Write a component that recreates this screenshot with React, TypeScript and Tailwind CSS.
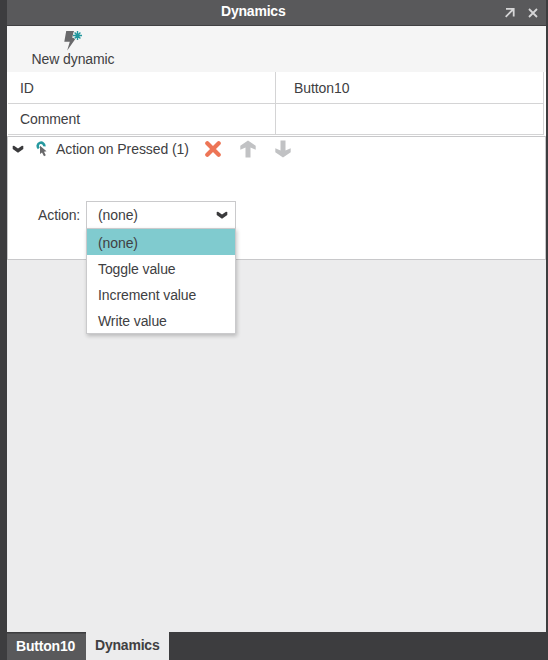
import React from "react";

const OPTIONS = ["(none)", "Toggle value", "Increment value", "Write value"];

function Chevron() {
  return (
    <svg width="12" height="8" viewBox="0 0 12 8" className="shrink-0">
      <path d="M0.7 1 L2 0.7 L6 3.4 L10 0.7 L11.3 1 V4 L6 7.8 L0.7 4 Z" fill="#3a3a3c" />
    </svg>
  );
}

function BoltIcon() {
  return (
    <svg width="20" height="22" viewBox="0 0 20 22" className="block">
      <path d="M3.2 1 H11 L9.2 7.8 H13.2 L4.2 20.5 L6.8 11.8 H1.3 Z" fill="#69696b" />
      <circle cx="14.5" cy="5.5" r="4.6" fill="#f5f5f5" />
      <g stroke="#22979d" strokeWidth="1.4">
        <path d="M14.5 1 V10 M10 5.5 H19 M11.6 2.6 L17.4 8.4 M17.4 2.6 L11.6 8.4" />
      </g>
    </svg>
  );
}

function PressedIcon() {
  return (
    <svg width="11" height="16" viewBox="0 0 11 16" className="shrink-0">
      <path d="M2.8 7.4 A3.3 3.3 0 1 1 8.3 5.4" fill="none" stroke="#26999f" strokeWidth="2.6" />
      <path d="M4 4.8 V13 L6 11.5 L8 15.2 L9.8 14.2 L8 10.8 L10.5 10.2 Z" fill="#69696b" />
    </svg>
  );
}

function DeleteIcon() {
  return (
    <svg width="16" height="16" viewBox="0 0 16 16" className="shrink-0">
      <path d="M2.3 2.3 L13.7 13.7 M13.7 2.3 L2.3 13.7" stroke="#ed7556" strokeWidth="4.2" strokeLinecap="round" />
    </svg>
  );
}

function ArrowIcon({ down = false }: { down?: boolean }) {
  return (
    <svg width="16" height="18" viewBox="0 0 16 18" className={down ? "shrink-0 rotate-180" : "shrink-0"}>
      <path d="M8 0.5 L15.7 5.8 V9.8 L10.5 7.6 V17.5 H5.5 V7.6 L0.3 9.8 V5.8 Z" fill="#c1c2c4" />
    </svg>
  );
}

export default function App() {
  return (
    <div className="flex h-[660px] w-[548px] flex-col overflow-hidden bg-[#3d3d3f] pr-[2px] pl-[7px] font-['Liberation_Sans',Arial,sans-serif] text-[14px] leading-4 tracking-[-0.09px] text-[#404042]">
      <header className="flex h-[26px] shrink-0 items-center border-b border-[#414143] bg-[#59595b] pb-[2px]">
        <h1 className="-mt-[2px] flex-1 pl-[214px] font-bold tracking-[-0.2px] text-white">Dynamics</h1>
        <div className="flex w-[42px] items-center gap-[13px] pt-[2px]">
          <svg width="11" height="11" viewBox="0 0 11 11">
            <path d="M2 1.8 H9.7 V9.5 M9.5 2 L1.7 9.8" fill="none" stroke="#d6d6d7" strokeWidth="1.8" />
          </svg>
          <svg width="10" height="10" viewBox="0 0 10 10">
            <path d="M1 1 L9 9 M9 1 L1 9" stroke="#d6d6d7" strokeWidth="1.8" />
          </svg>
        </div>
      </header>

      <div className="h-[46px] shrink-0 bg-[#f5f5f5] pt-1 pl-[25px]">
        <button className="flex w-[82px] flex-col items-center whitespace-nowrap">
          <BoltIcon />
          <span className="-mt-px">New dynamic</span>
        </button>
      </div>

      <div className="h-16 shrink-0 bg-white pr-[2px] pl-px">
        <div className="flex h-8 border-r border-b border-[#d4d4d5]">
          <div className="w-[268px] border-r border-[#d4d4d5] pt-2 pl-3">ID</div>
          <div className="flex-1 pt-2 pl-[18px]">Button10</div>
        </div>
        <div className="flex h-[31px] border-r border-b border-[#d4d4d5]">
          <div className="w-[268px] border-r border-[#d4d4d5] pt-[7px] pl-3">Comment</div>
          <div className="flex-1" />
        </div>
      </div>

      <section className="h-[124px] shrink-0 border border-[#c8c8ca] bg-white">
        <div className="flex h-6 items-center pl-[4px]">
          <Chevron />
          <div className="ml-[12px] flex items-center">
            <PressedIcon />
            <span className="ml-[9px] w-[133px] whitespace-nowrap">Action on Pressed (1)</span>
          </div>
          <div className="ml-[16px] flex items-center gap-[19px]">
            <DeleteIcon />
            <ArrowIcon />
            <ArrowIcon down />
          </div>
        </div>

        <div className="mt-10 flex items-start pl-[30px]">
          <span className="w-12 pt-[6px]">Action:</span>
          <div className="relative w-[150px]">
            <div className="flex h-[28px] items-center justify-between border border-[#cacacc] bg-white pr-[7px] pb-px pl-[11px]">
              <span>(none)</span>
              <Chevron />
            </div>
            <ul className="absolute top-[27px] left-0 z-10 w-[150px] border border-[#cacacc] bg-white shadow-[1px_2px_4px_rgba(0,0,0,0.22)]">
              {OPTIONS.map((option, index) => (
                <li
                  key={option}
                  className={index === 0 ? "h-[26px] bg-[#80cbcf] pt-[6px] pl-[11px]" : "h-[26px] pt-[6px] pl-[11px]"}
                >
                  {option}
                </li>
              ))}
            </ul>
          </div>
        </div>
      </section>

      <main className="min-h-0 flex-1 bg-[#ececed]" />

      <nav className="flex h-7 shrink-0 font-bold tracking-[-0.2px]">
        <div className="mt-px w-[79px] border-t border-[#4b4b4d] bg-[#59595b] pt-[4px] pl-[9px] text-white">Button10</div>
        <div className="w-[83px] bg-[#ececed] pt-[5px] pl-[9px]">Dynamics</div>
      </nav>
    </div>
  );
}
